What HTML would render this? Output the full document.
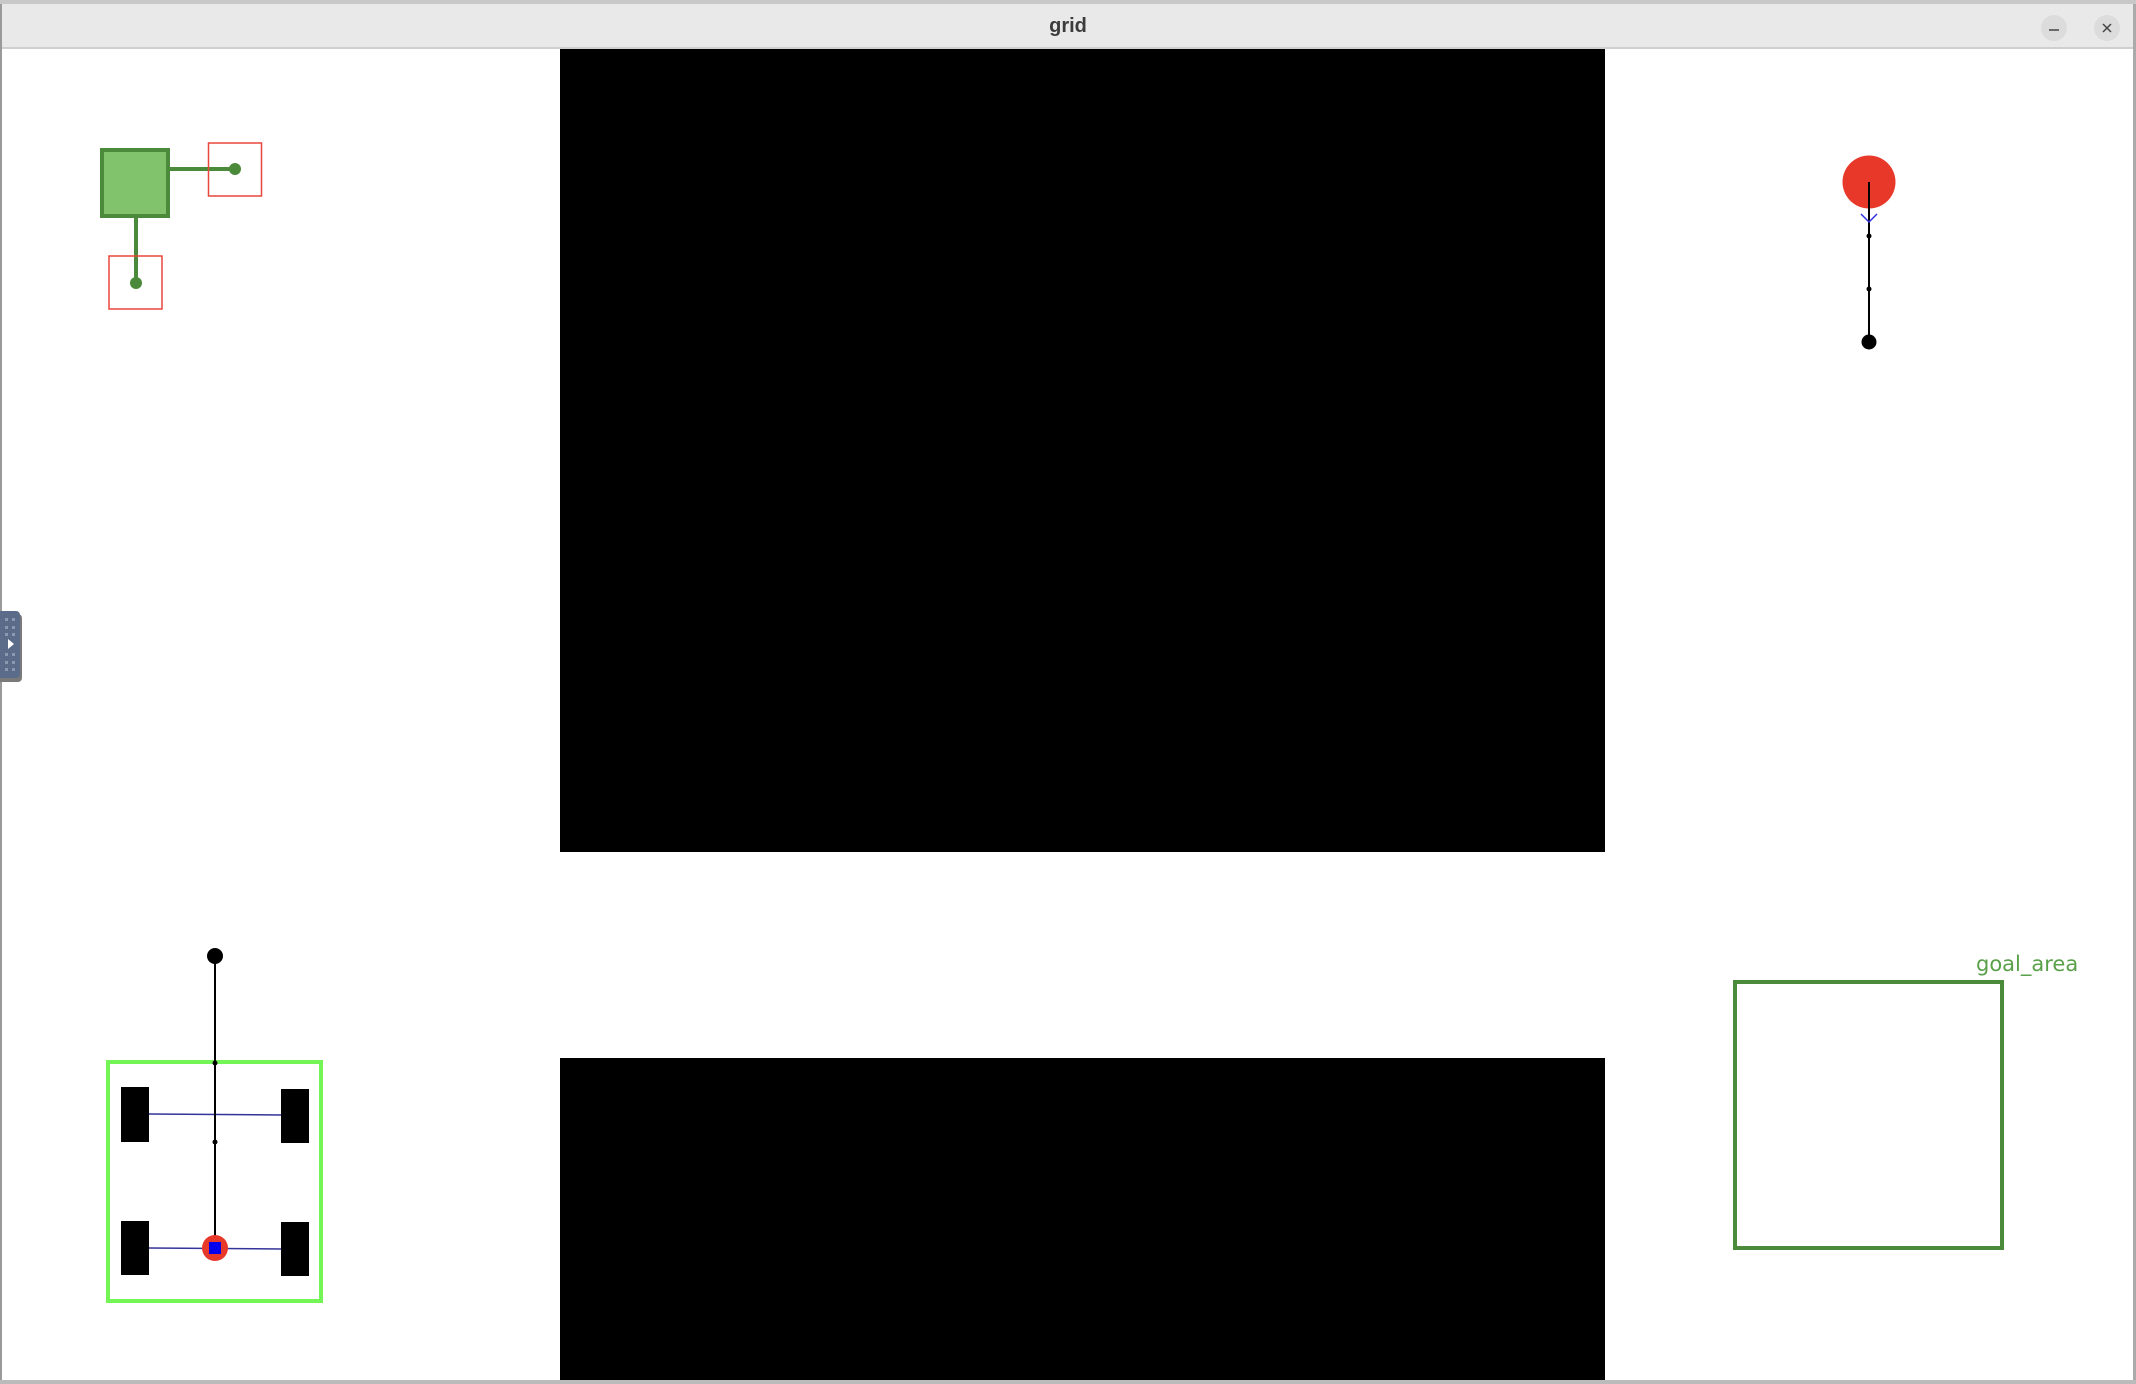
<!DOCTYPE html>
<html><head><style>
html,body{margin:0;padding:0;width:2136px;height:1384px;overflow:hidden;background:#fff;}
</style></head><body>
<svg width="2136" height="1384" xmlns="http://www.w3.org/2000/svg" style="position:absolute;left:0;top:0">
<rect x="0" y="0" width="2136" height="1384" fill="#fff"/>
<rect x="0" y="0" width="2136" height="4" fill="#c8c8c8"/>
<rect x="0" y="4" width="2136" height="43" fill="#e9e9e9"/>
<rect x="0" y="47" width="2136" height="2" fill="#cfcfcf"/>
<text x="1068" y="32" font-family="Liberation Sans, sans-serif" font-size="20" font-weight="bold" fill="#3c3c3c" text-anchor="middle">grid</text>
<circle cx="2054" cy="28" r="13" fill="#dcdcdc"/>
<line x1="2049" y1="30" x2="2059" y2="30" stroke="#444" stroke-width="1.5"/>
<circle cx="2107" cy="28" r="13" fill="#dcdcdc"/>
<path d="M2103 24 L2111 32 M2111 24 L2103 32" stroke="#444" stroke-width="1.5"/>
<rect x="0" y="4" width="2" height="1380" fill="#9a9a9a"/>
<rect x="2133" y="4" width="3" height="1380" fill="#aaa"/>
<rect x="0" y="1380" width="2136" height="4" fill="#bbb"/>
<rect x="560" y="49" width="1045" height="803" fill="#000"/>
<rect x="560" y="1058" width="1045" height="322" fill="#000"/>
<!-- top-left widget -->
<line x1="169" y1="169" x2="235" y2="169" stroke="#4a8a3a" stroke-width="4"/>
<line x1="136" y1="216" x2="136" y2="283" stroke="#4a8a3a" stroke-width="4"/>
<rect x="102" y="150" width="66" height="66" fill="#80c36c" stroke="#4a8a3a" stroke-width="4"/>
<rect x="208.5" y="143" width="53" height="53" fill="none" stroke="#e8473c" stroke-width="1.5"/>
<rect x="109" y="256" width="53" height="53" fill="none" stroke="#e8473c" stroke-width="1.5"/>
<circle cx="235" cy="169" r="6" fill="#4a8a3a"/>
<circle cx="136" cy="283" r="6" fill="#4a8a3a"/>
<!-- top-right widget -->
<circle cx="1869" cy="182" r="26.5" fill="#e8382a"/>
<line x1="1869" y1="182" x2="1869" y2="342" stroke="#000" stroke-width="2"/>
<path d="M1861 214 L1869 222 L1877 214" fill="none" stroke="#3030e0" stroke-width="1.5"/>
<circle cx="1869" cy="236" r="2.5" fill="#000"/>
<circle cx="1869" cy="289" r="2.5" fill="#000"/>
<circle cx="1869" cy="342" r="7.5" fill="#000"/>
<!-- bottom-left robot -->
<rect x="108" y="1062" width="213" height="239" fill="none" stroke="#73f655" stroke-width="4"/>
<line x1="149" y1="1114" x2="282" y2="1115" stroke="#333399" stroke-width="1.5"/>
<line x1="149" y1="1248" x2="282" y2="1249" stroke="#333399" stroke-width="1.5"/>
<line x1="215" y1="956" x2="215" y2="1248" stroke="#000" stroke-width="2"/>
<circle cx="215" cy="956" r="8" fill="#000"/>
<circle cx="215" cy="1063" r="2.5" fill="#000"/>
<circle cx="215" cy="1142" r="2.5" fill="#000"/>
<rect x="121" y="1087" width="28" height="55" fill="#000"/>
<rect x="281" y="1089" width="28" height="54" fill="#000"/>
<rect x="121" y="1221" width="28" height="54" fill="#000"/>
<rect x="281" y="1222" width="28" height="54" fill="#000"/>
<circle cx="215" cy="1248" r="13" fill="#e8382a"/>
<rect x="209" y="1242" width="12" height="12" fill="#0000ee"/>
<!-- goal area -->
<rect x="1735" y="982" width="267" height="266" fill="none" stroke="#4a8a3a" stroke-width="4"/>
<text x="1976" y="971" font-family="DejaVu Sans, Liberation Sans, sans-serif" font-size="21" fill="#5aa04a">goal_area</text>
<!-- left tab -->
<rect x="-6" y="614" width="28" height="68" rx="4" fill="#7a7a7a"/>
<rect x="-6" y="611" width="26" height="67" rx="4" fill="#5b6b8a"/>
<g fill="#8a98b2">
<rect x="5" y="618" width="3" height="3"/><rect x="12" y="618" width="3" height="3"/>
<rect x="5" y="626" width="3" height="3"/><rect x="12" y="626" width="3" height="3"/>
<rect x="5" y="633" width="3" height="3"/><rect x="12" y="633" width="3" height="3"/>
<rect x="5" y="653" width="3" height="3"/><rect x="12" y="653" width="3" height="3"/>
<rect x="5" y="661" width="3" height="3"/><rect x="12" y="661" width="3" height="3"/>
<rect x="5" y="668" width="3" height="3"/><rect x="12" y="668" width="3" height="3"/>
</g>
<path d="M8 639 L14 644 L8 649 Z" fill="#fff"/>
</svg>
</body></html>
